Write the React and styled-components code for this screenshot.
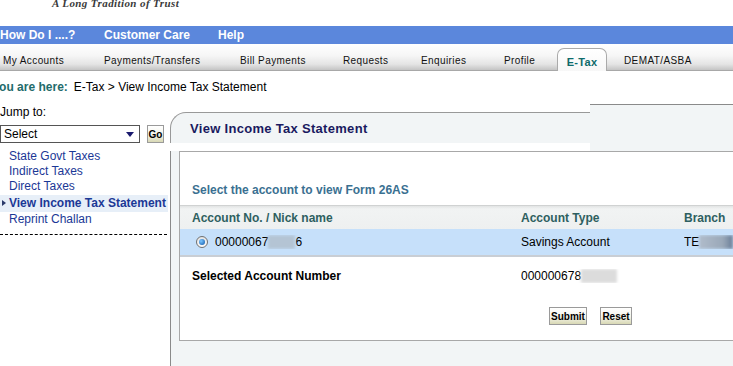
import React from "react";
import styled, { createGlobalStyle } from "styled-components";

const GlobalStyle = createGlobalStyle`
	html, body {
		margin: 0;
		padding: 0;
		background: #fff;
		overflow: hidden;
	}
	body {
		font-family: "Liberation Sans", Arial, sans-serif;
		font-size: 12px;
		color: #000;
	}
`;

const Page = styled.div`
	width: 733px;
	height: 366px;
	overflow: hidden;
	display: flex;
	flex-direction: column;
`;

const LogoRow = styled.div`
	height: 26px;
	overflow: hidden;
	padding-left: 52px;
`;

const Tagline = styled.div`
	margin-top: -3px;
	font-family: "Liberation Serif", "Times New Roman", serif;
	font-style: italic;
	font-weight: bold;
	font-size: 11px;
	line-height: 12px;
	letter-spacing: 0.4px;
	color: #3a3a3a;
`;

const NavBar = styled.div`
	height: 18px;
	background: #5b87dc;
	display: flex;
	align-items: center;
`;

const NavItem = styled.div`
	width: ${p => p.$w || "auto"};
	color: #fff;
	font-weight: bold;
	font-size: 12px;
	white-space: nowrap;
`;

const TabBar = styled.div`
	height: 26px;
	background: linear-gradient(#ffffff 0%, #f6f6f6 45%, #e4e4e4 78%, #c4c4c4 100%);
	border-bottom: 1px solid #a8a8a8;
	display: flex;
	align-items: flex-end;
`;

const Tab = styled.div`
	width: ${p => p.$w}px;
	padding-left: ${p => p.$pad || 0}px;
	padding-bottom: 4px;
	font-size: 10px;
	letter-spacing: 0.4px;
	color: #111;
	white-space: nowrap;
	box-sizing: border-box;
`;

const ActiveTab = styled.div`
	width: 50px;
	height: 23px;
	margin-bottom: -1px;
	margin-right: 17px;
	box-sizing: border-box;
	border: 1px solid #aaa;
	border-bottom: none;
	border-radius: 7px 7px 0 0;
	background: linear-gradient(#ffffff, #f7f7f7);
	display: flex;
	align-items: center;
	justify-content: center;
	padding-top: 3px;
	font-weight: bold;
	font-size: 11px;
	color: #0e6b6b;
	letter-spacing: 0.3px;
`;

const Crumbs = styled.div`
	height: 30px;
	display: flex;
	align-items: center;
	padding-top: 2px;
	box-sizing: border-box;
	white-space: nowrap;
`;

const HereLabel = styled.span`
	margin-left: -8px;
	margin-right: 6px;
	font-weight: bold;
	color: #1f6b6b;
`;

const Main = styled.div`
	flex: 1;
	display: flex;
	min-height: 0;
`;

const Sidebar = styled.div`
	width: 170px;
	flex-shrink: 0;
	display: flex;
	flex-direction: column;
`;

const JumpLabel = styled.div`
	margin-top: 4px;
	line-height: 14px;
`;

const JumpRow = styled.div`
	display: flex;
	align-items: center;
	gap: 7px;
	margin-top: 6px;
`;

const SelectBox = styled.div`
	width: 140px;
	height: 18px;
	box-sizing: border-box;
	border: 1px solid #555;
	background: #fff;
	display: flex;
	align-items: center;
	justify-content: space-between;
	padding: 0 5px 0 3px;
`;

const Caret = styled.span`
	width: 0;
	height: 0;
	border-left: 4px solid transparent;
	border-right: 4px solid transparent;
	border-top: 5px solid #1a1a6e;
`;

const SmallButton = styled.div`
	height: ${p => p.$h || 17}px;
	box-sizing: border-box;
	border: 1px solid #9a9a9a;
	background: linear-gradient(#ffffff 0%, #f4f4ea 55%, #d8d8b4 100%);
	display: flex;
	align-items: center;
	justify-content: center;
	padding: 0 1px;
	font-weight: bold;
	font-size: 10px;
	color: #000;
`;

const LinkList = styled.div`
	margin-top: 6px;
	display: flex;
	flex-direction: column;
`;

const SideLink = styled.div`
	height: ${p => (p.$active ? 17 : 15)}px;
	line-height: ${p => (p.$active ? 17 : 15)}px;
	margin-top: ${p => (p.$gap || 0)}px;
	padding-left: 9px;
	position: relative;
	width: 168px;
	box-sizing: border-box;
	color: #1b3896;
	font-weight: ${p => (p.$active ? "bold" : "normal")};
	background: ${p => (p.$active ? "#e7eff8" : "transparent")};
	white-space: nowrap;
`;

const Pointer = styled.span`
	position: absolute;
	left: 2px;
	top: 5px;
	width: 0;
	height: 0;
	border-top: 3px solid transparent;
	border-bottom: 3px solid transparent;
	border-left: 4px solid #2a3a6a;
`;

const Dashes = styled.div`
	width: 167px;
	margin-top: 7px;
	border-top: 1px dashed #000;
`;

const Panel = styled.div`
	flex: 1;
	display: flex;
	flex-direction: column;
	min-width: 0;
`;

const PanelTop = styled.div`
	height: 50px;
	display: flex;
`;

const HeaderTab = styled.div`
	width: 420px;
	height: 31px;
	margin-top: 11px;
	box-sizing: border-box;
	border-top: 1px solid #999;
	border-left: 1px solid #999;
	border-top-left-radius: 16px;
	background: #f2f5f6;
	display: flex;
	align-items: center;
	padding-left: 19px;
	font-weight: bold;
	font-size: 13px;
	color: #1a1a60;
	letter-spacing: 0.3px;
`;

const SideStrip = styled.div`
	flex: 1;
	margin-top: 3px;
	border-top: 1px solid #8a8a8a;
	background: #f2f5f6;
`;

const PanelBody = styled.div`
	flex: 1;
	border-left: 1px solid #8a8a8a;
	background: #f2f5f6;
	padding: 0 0 25px 8px;
	box-sizing: border-box;
	display: flex;
`;

const ContentBox = styled.div`
	flex: 1;
	background: #fff;
	border: 1px solid #a8a8a8;
	border-right: none;
	display: flex;
	flex-direction: column;
`;

const Intro = styled.div`
	margin-top: 31px;
	padding-left: 12px;
	font-weight: bold;
	color: #3a7091;
	line-height: 14px;
`;

const Row = styled.div`
	display: grid;
	grid-template-columns: 341px 163px 1fr;
	align-items: center;
	height: ${p => p.$h}px;
	background: ${p => p.$bg || "transparent"};
	border-top: ${p => p.$top || "none"};
	border-bottom: ${p => p.$bottom || "none"};
	font-weight: ${p => (p.$bold ? "bold" : "normal")};
	color: ${p => p.$color || "#000"};
	white-space: nowrap;
	margin-top: ${p => p.$mt || 0}px;
	box-sizing: border-box;
`;

const Cell = styled.div`
	padding-left: ${p => p.$pad || 0}px;
	display: flex;
	align-items: center;
	overflow: hidden;
	font-weight: ${p => p.$weight || "inherit"};
`;

const Radio = styled.span`
	width: 12px;
	height: 12px;
	box-sizing: border-box;
	border-radius: 50%;
	border: 1px solid #707070;
	background: linear-gradient(#e4e4e4, #fafafa);
	display: inline-flex;
	align-items: center;
	justify-content: center;
	margin: 0 7px 0 4px;
	&::after {
		content: "";
		width: 6px;
		height: 6px;
		border-radius: 50%;
		background: radial-gradient(circle at 35% 35%, #7cc6ff, #0a55a8);
	}
`;

const Smudge = styled.span`
	display: inline-block;
	width: ${p => p.$w}px;
	height: 14px;
	background: ${p => p.$bg};
	filter: blur(1.5px);
`;

const ButtonRow = styled.div`
	display: flex;
	gap: 13px;
	margin-top: 12px;
	padding-left: 369px;
`;

const tabs = [
	{ label: "My Accounts", w: 104, pad: 3 },
	{ label: "Payments/Transfers", w: 136 },
	{ label: "Bill Payments", w: 103 },
	{ label: "Requests", w: 78 },
	{ label: "Enquiries", w: 83 },
	{ label: "Profile", w: 53 },
];

const sideLinks = ["State Govt Taxes", "Indirect Taxes", "Direct Taxes"];

const App = () => (
	<Page>
		<GlobalStyle />
		<LogoRow>
			<Tagline>A Long Tradition of Trust</Tagline>
		</LogoRow>
		<NavBar>
			<NavItem $w="104px">How Do I ....?</NavItem>
			<NavItem $w="114px">Customer Care</NavItem>
			<NavItem>Help</NavItem>
		</NavBar>
		<TabBar>
			{tabs.map(t => (
				<Tab key={t.label} $w={t.w} $pad={t.pad}>
					{t.label}
				</Tab>
			))}
			<ActiveTab>E-Tax</ActiveTab>
			<Tab $w={100}>DEMAT/ASBA</Tab>
		</TabBar>
		<Crumbs>
			<HereLabel>You are here:</HereLabel>
			E-Tax &gt; View Income Tax Statement
		</Crumbs>
		<Main>
			<Sidebar>
				<JumpLabel>Jump to:</JumpLabel>
				<JumpRow>
					<SelectBox>
						Select
						<Caret />
					</SelectBox>
					<SmallButton $h={18} style={{ width: 17 }}>
						Go
					</SmallButton>
				</JumpRow>
				<LinkList>
					{sideLinks.map(l => (
						<SideLink key={l}>{l}</SideLink>
					))}
					<SideLink $active $gap={1}>
						<Pointer />
						View Income Tax Statement
					</SideLink>
					<SideLink>Reprint Challan</SideLink>
				</LinkList>
				<Dashes />
			</Sidebar>
			<Panel>
				<PanelTop>
					<HeaderTab>View Income Tax Statement</HeaderTab>
					<SideStrip />
				</PanelTop>
				<PanelBody>
					<ContentBox>
						<Intro>Select the account to view Form 26AS</Intro>
						<Row
							$h={24}
							$mt={8}
							$bold
							$color="#2e5f60"
							$bg="linear-gradient(#e2e4e4 0px, #f1f3f3 3px, #eef0f0 100%)"
							$top="1px solid #d0d2d2"
						>
							<Cell $pad={12}>Account No. / Nick name</Cell>
							<Cell>Account Type</Cell>
							<Cell>Branch</Cell>
						</Row>
						<Row $h={28} $bg="#c6e0fa" $bottom="2px solid #c9ced4">
							<Cell $pad={12}>
								<Radio />
								00000067
								<Smudge $w={27} $bg="#b4c4d4" />
								6
							</Cell>
							<Cell>Savings Account</Cell>
							<Cell>
								TE
								<Smudge
									$w={40}
									$bg="linear-gradient(90deg, #b0bccb, #9aa8b8 70%, #6a7e98)"
								/>
							</Cell>
						</Row>
						<Row $h={38} $bold>
							<Cell $pad={12}>Selected Account Number</Cell>
							<Cell $weight="normal">
								000000678
								<Smudge $w={36} $bg="#dcdcdc" />
							</Cell>
							<Cell />
						</Row>
						<ButtonRow>
							<SmallButton $h={18} style={{ width: 38 }}>
								Submit
							</SmallButton>
							<SmallButton $h={18} style={{ width: 32 }}>
								Reset
							</SmallButton>
						</ButtonRow>
					</ContentBox>
				</PanelBody>
			</Panel>
		</Main>
	</Page>
);

export default App;
